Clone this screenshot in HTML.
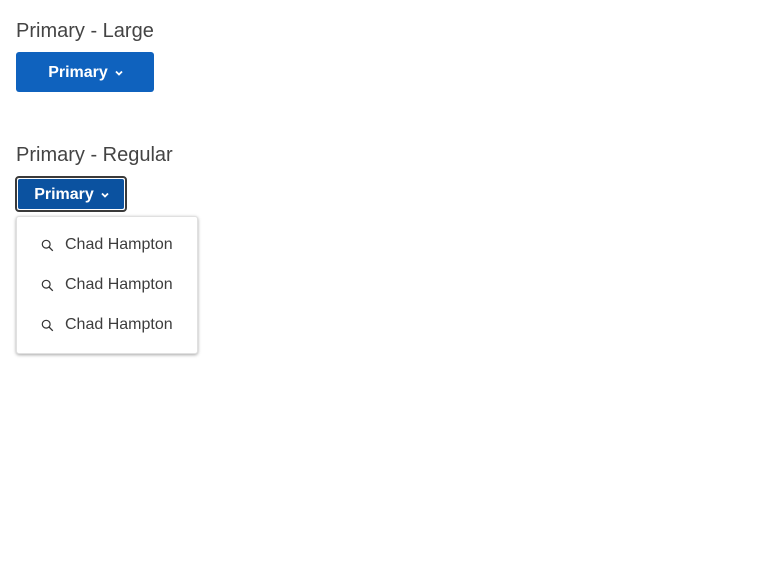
<!DOCTYPE html>
<html><head><style>
body{margin:0;background:#fff;font-family:"Liberation Sans",sans-serif;color:#3d3d3d;width:768px;height:576px;position:relative}
.h{position:absolute;left:16px;font-size:20px;color:#444}
.btn{position:absolute;color:#fff;font-weight:bold;font-size:16px;display:flex;align-items:center;justify-content:center;box-sizing:border-box}
.menu{position:absolute;left:16px;top:216px;width:182px;height:138px;box-sizing:border-box;border:1px solid #e0e0e0;border-radius:3px;box-shadow:0 1px 3px rgba(0,0,0,.35);background:#fff}
.it{position:absolute;left:24px;height:20px;display:flex;align-items:center;font-size:16px;color:#3d3d3d}
.it svg{margin-right:11px}
</style></head><body>
<div class="h" style="top:20px">Primary - Large</div>
<div class="btn" style="left:16px;top:52px;width:138px;height:40px;background:#0f62be;border-radius:3px;padding-left:2px;padding-top:1px">Primary<svg width="10" height="10" viewBox="0 0 10 10" style="margin-left:6px"><path d="M2 3.5l3 3 3-3" fill="none" stroke="#fff" stroke-width="1.8"/></svg></div>
<div class="h" style="top:144px">Primary - Regular</div>
<div style="position:absolute;left:15px;top:176px;width:112px;height:36px;box-sizing:border-box;border:2px solid #3a3a3a;border-radius:4px"></div>
<div class="btn" style="left:18px;top:179px;width:106px;height:30px;background:#0b52a0;border-radius:2px;padding-left:2px;padding-top:1px">Primary<svg width="10" height="10" viewBox="0 0 10 10" style="margin-left:6px"><path d="M2 3.5l3 3 3-3" fill="none" stroke="#fff" stroke-width="1.8"/></svg></div>
<div class="menu">
<div class="it" style="top:18px"><svg width="13" height="13" viewBox="0 0 13 13"><circle cx="5.2" cy="5.2" r="3.9" fill="none" stroke="#333" stroke-width="1.2"/><path d="M8 8l3.8 3.8" stroke="#333" stroke-width="1.3"/></svg>Chad Hampton</div>
<div class="it" style="top:58px"><svg width="13" height="13" viewBox="0 0 13 13"><circle cx="5.2" cy="5.2" r="3.9" fill="none" stroke="#333" stroke-width="1.2"/><path d="M8 8l3.8 3.8" stroke="#333" stroke-width="1.3"/></svg>Chad Hampton</div>
<div class="it" style="top:98px"><svg width="13" height="13" viewBox="0 0 13 13"><circle cx="5.2" cy="5.2" r="3.9" fill="none" stroke="#333" stroke-width="1.2"/><path d="M8 8l3.8 3.8" stroke="#333" stroke-width="1.3"/></svg>Chad Hampton</div>
</div>
</body></html>
